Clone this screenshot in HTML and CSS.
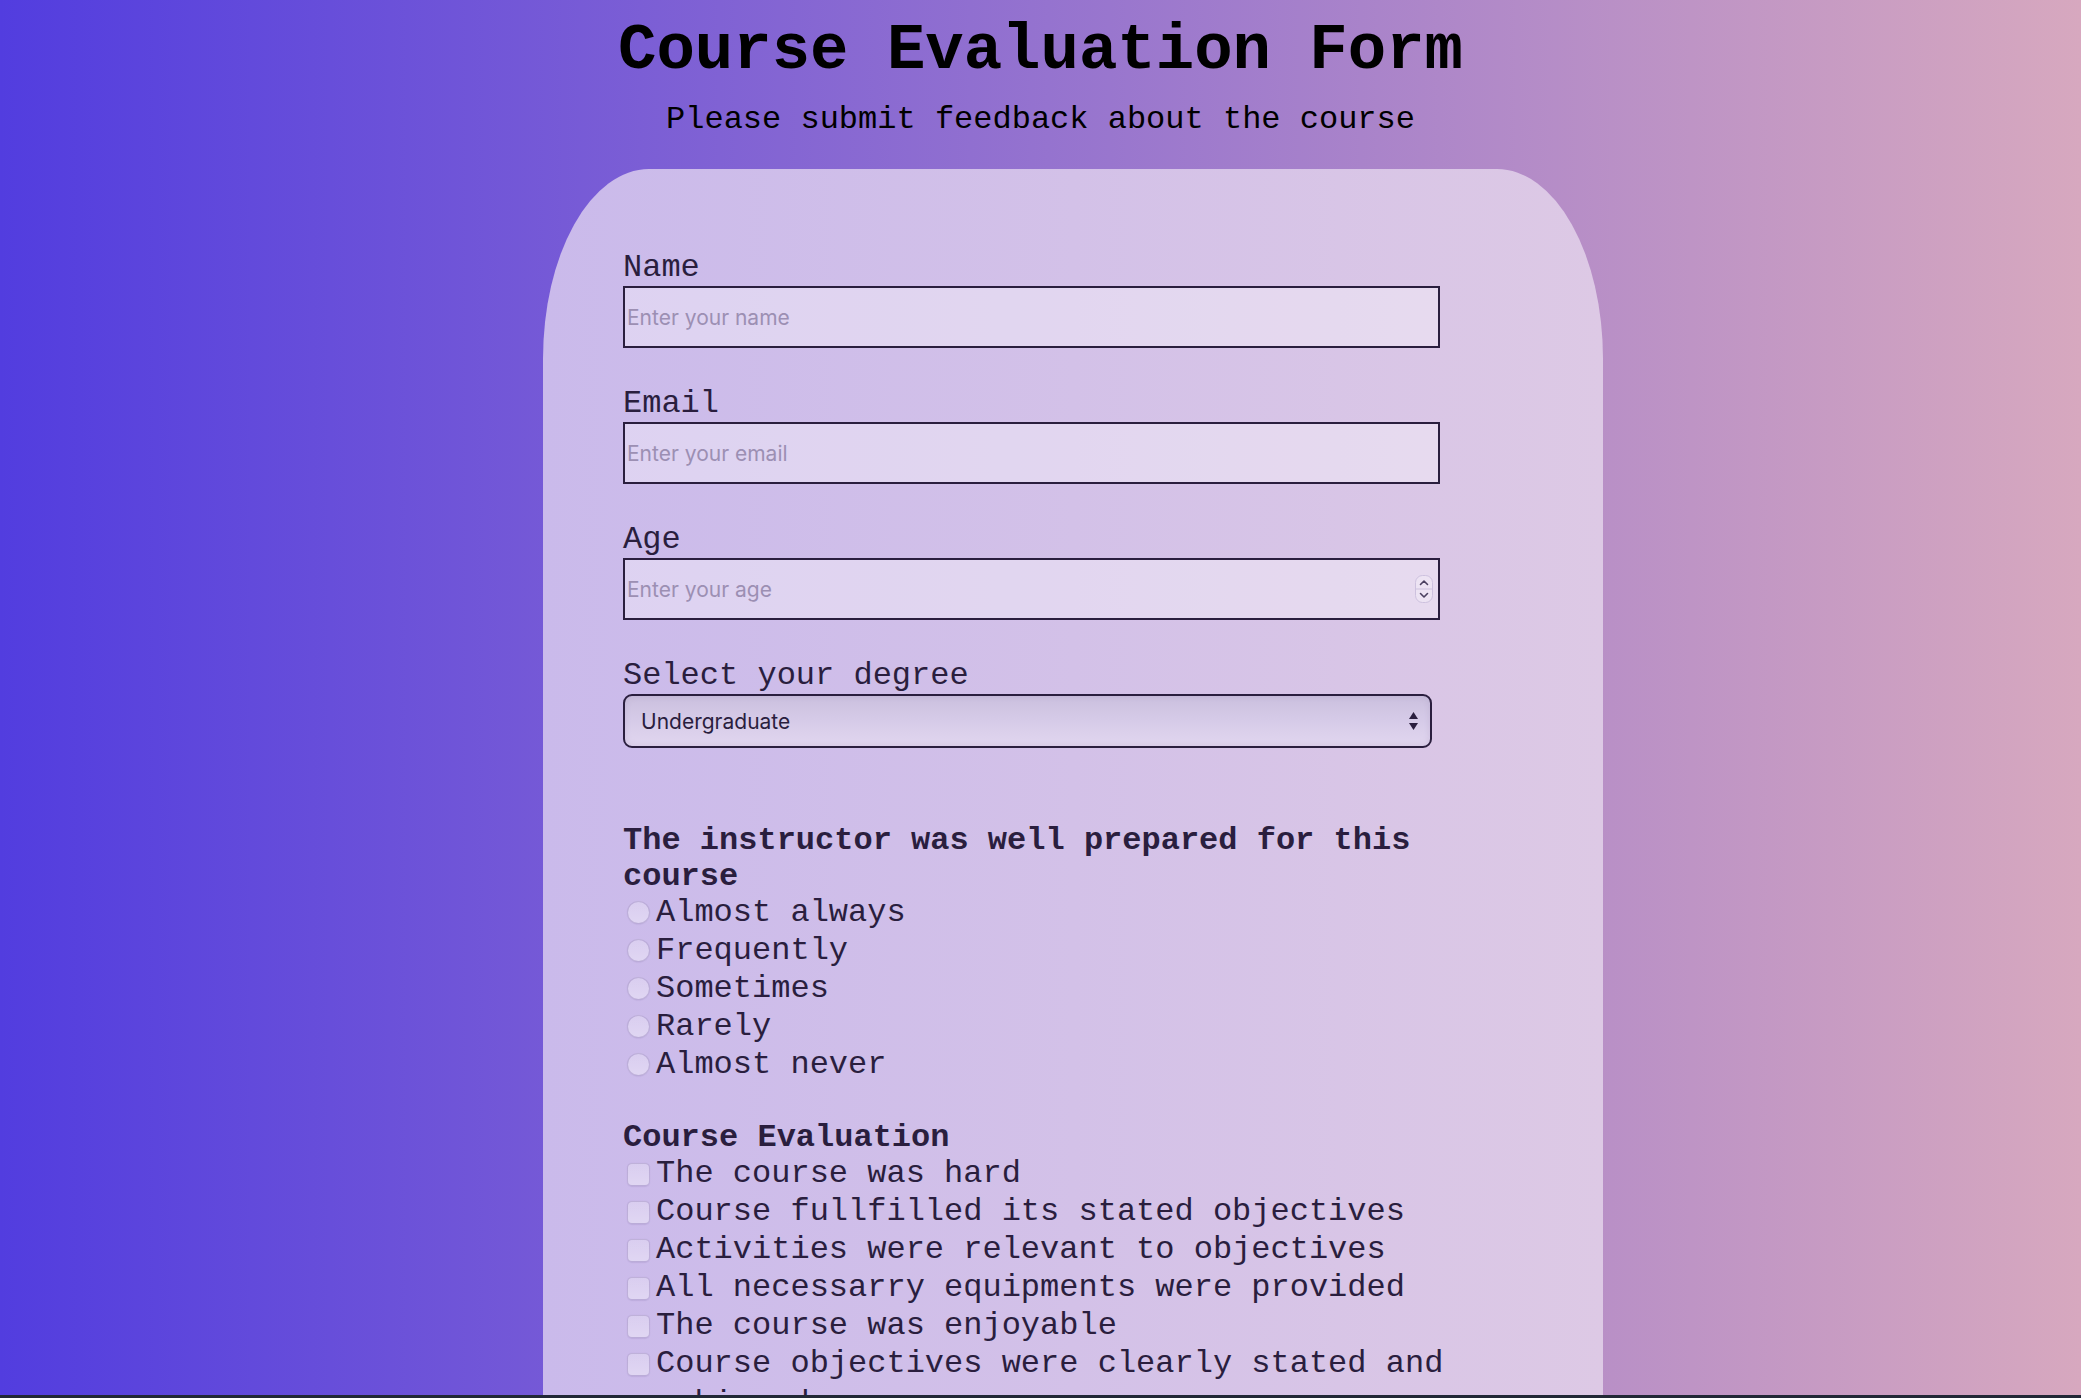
FILE: index.html
```html
<!DOCTYPE html>
<html lang="en">
<head>
<meta charset="utf-8">
<title>Course Evaluation Form</title>
<link rel="stylesheet" href="styles.css">
</head>
<body>
<header class="page-header">
  <h1 class="title">Course Evaluation Form</h1>
  <p class="subtitle">Please submit feedback about the course</p>
</header>

<form class="card">
  <div class="field">
    <label class="field-label" for="name">Name</label>
    <input class="text-input" id="name" type="text" placeholder="Enter your name">
  </div>
  <div class="field">
    <label class="field-label" for="email">Email</label>
    <input class="text-input" id="email" type="email" placeholder="Enter your email">
  </div>
  <div class="field">
    <label class="field-label" for="age">Age</label>
    <div class="input-wrap">
      <input class="text-input" id="age" type="number" placeholder="Enter your age">
      <svg class="spinner" viewBox="0 0 18 28" width="18" height="28" aria-hidden="true">
        <rect x="0.5" y="0.5" width="17" height="27" rx="7" fill="rgba(255,255,255,0.25)" stroke="#cdc1de"/>
        <line x1="1" y1="14" x2="17" y2="14" stroke="#cdc1de"/>
        <path d="M5.5 9.5 L9 6 L12.5 9.5" fill="none" stroke="#4b4060" stroke-width="1.6" stroke-linecap="round" stroke-linejoin="round"/>
        <path d="M5.5 18.5 L9 22 L12.5 18.5" fill="none" stroke="#4b4060" stroke-width="1.6" stroke-linecap="round" stroke-linejoin="round"/>
      </svg>
    </div>
  </div>
  <div class="field field-select">
    <label class="field-label" for="degree">Select your degree</label>
    <div class="select-wrap">
      <select class="select" id="degree">
        <option>Undergraduate</option>
        <option>Graduate</option>
        <option>Postgraduate</option>
      </select>
      <svg class="select-arrows" viewBox="0 0 9 18" width="9" height="18" aria-hidden="true">
        <polygon points="0,7 4.5,0 9,7" fill="#2a1e3e"/>
        <polygon points="0,11 9,11 4.5,18" fill="#2a1e3e"/>
      </svg>
    </div>
  </div>

  <div class="group">
    <p class="group-title">The instructor was well prepared for this course</p>
    <div class="options">
      <label class="option"><input class="radio" type="radio" name="prepared"><span class="option-text">Almost always</span></label>
      <label class="option"><input class="radio" type="radio" name="prepared"><span class="option-text">Frequently</span></label>
      <label class="option"><input class="radio" type="radio" name="prepared"><span class="option-text">Sometimes</span></label>
      <label class="option"><input class="radio" type="radio" name="prepared"><span class="option-text">Rarely</span></label>
      <label class="option"><input class="radio" type="radio" name="prepared"><span class="option-text">Almost never</span></label>
    </div>
  </div>

  <div class="group">
    <p class="group-title">Course Evaluation</p>
    <div class="options">
      <label class="option"><input class="check" type="checkbox"><span class="option-text">The course was hard</span></label>
      <label class="option"><input class="check" type="checkbox"><span class="option-text">Course fullfilled its stated objectives</span></label>
      <label class="option"><input class="check" type="checkbox"><span class="option-text">Activities were relevant to objectives</span></label>
      <label class="option"><input class="check" type="checkbox"><span class="option-text">All necessarry equipments were provided</span></label>
      <label class="option"><input class="check" type="checkbox"><span class="option-text">The course was enjoyable</span></label>
      <label class="option"><input class="check" type="checkbox"><span class="option-text">Course objectives were clearly stated and achieved</span></label>
    </div>
  </div>

  <div class="field">
    <label class="field-label" for="comments">Comments</label>
    <textarea class="textarea" id="comments" placeholder="Enter your comments"></textarea>
  </div>
  <button class="submit" type="submit">Submit</button>
</form>

<div class="window-edge"></div>
</body>
</html>
```

FILE: styles.css
```css
* {
  box-sizing: border-box;
}

html,
body {
  margin: 0;
  padding: 0;
}

body {
  min-height: 100vh;
  background: linear-gradient(to right, #523ddf 0%, #d7a8bf 100%);
  font-family: "Liberation Mono", "Courier New", monospace;
  color: #2a1e3e;
}

.page-header {
  padding-top: 19px;
  text-align: center;
}

.title {
  margin: 0;
  font-size: 64px;
  line-height: 64px;
  font-weight: 700;
  color: #000;
}

.subtitle {
  margin: 20.5px 0 0;
  font-size: 32px;
  line-height: 32px;
  color: #000;
}

.card {
  width: 1060px;
  margin: 33.5px 0 0 543px;
  padding: 81px 80px 120px;
  border-radius: 106px 106px 0 0 / 190px 190px 0 0;
  background: linear-gradient(to right, #cabaeb 0%, #d3c1e8 50%, #ddc9e5 100%);
}

.field {
  margin-bottom: 38px;
}

.field-select {
  margin-bottom: 74.5px;
}

.field-label {
  display: block;
  font-size: 32px;
  line-height: 36px;
  color: #2a1e3e;
}

.input-wrap,
.select-wrap {
  position: relative;
}

.text-input {
  display: block;
  width: 817px;
  height: 62px;
  margin: 0;
  padding: 0 2px;
  border: 2px solid #2a1e3e;
  border-radius: 0;
  background: rgba(255, 255, 255, 0.35);
  font-family: "Inter", "Liberation Sans", sans-serif;
  font-size: 21px;
  color: #2a1e3e;
  outline: none;
  -moz-appearance: textfield;
}

.text-input::-webkit-inner-spin-button,
.text-input::-webkit-outer-spin-button {
  -webkit-appearance: none;
  margin: 0;
}

.text-input::placeholder,
.textarea::placeholder {
  color: #9c8fb3;
}

.spinner {
  position: absolute;
  left: 792px;
  top: 50%;
  transform: translateY(-50%);
}

.select-wrap {
  width: 809px;
}

.select {
  display: block;
  width: 100%;
  height: 54px;
  margin: 0;
  padding: 0 40px 0 16px;
  border: 2px solid #2a1e3e;
  border-radius: 9px;
  -webkit-appearance: none;
  appearance: none;
  background: linear-gradient(to bottom, #cbc0de 0%, #d6cbe8 50%, #e1d6ef 100%);
  box-shadow: inset 0 0 6px rgba(120, 100, 150, 0.18);
  font-family: "Inter", "Liberation Sans", sans-serif;
  font-size: 21px;
  color: #2a1e3e;
  outline: none;
}

.select-arrows {
  position: absolute;
  right: 14px;
  top: 50%;
  transform: translateY(-50%);
  pointer-events: none;
}

.group {
  margin-bottom: 37.5px;
}

.group-title {
  margin: 0;
  font-size: 32px;
  line-height: 36px;
  font-weight: 700;
  color: #2a1e3e;
}

.options {
  display: flex;
  flex-direction: column;
  gap: 2px;
}

.option {
  display: flex;
  align-items: flex-start;
  font-size: 32px;
  line-height: 36px;
  color: #2a1e3e;
}

.option-text {
  display: block;
  line-height: 40px;
  margin: -2px 0;
}

.radio,
.check {
  -webkit-appearance: none;
  appearance: none;
  flex: none;
  width: 23px;
  height: 23px;
  margin: 6.5px 6px 0 4px;
  border: 1px solid rgba(120, 100, 165, 0.32);
  background: linear-gradient(to bottom, rgba(255, 255, 255, 0.28), rgba(255, 255, 255, 0.4));
  box-shadow: 0 0.5px 1px rgba(80, 60, 120, 0.12);
}

.radio {
  border-radius: 50%;
}

.check {
  border-radius: 5px;
}

.textarea {
  display: block;
  width: 817px;
  height: 160px;
  padding: 4px;
  border: 2px solid #2a1e3e;
  background: rgba(255, 255, 255, 0.35);
  font-family: "Inter", "Liberation Sans", sans-serif;
  font-size: 21px;
  resize: none;
}

.submit {
  padding: 12px 40px;
  border: 2px solid #2a1e3e;
  border-radius: 9px;
  background: #523ddf;
  color: #fff;
  font-family: "Liberation Mono", monospace;
  font-size: 28px;
}

.window-edge {
  position: fixed;
  left: 0;
  right: 0;
  bottom: 0;
  height: 3px;
  background: #222836;
}
```
